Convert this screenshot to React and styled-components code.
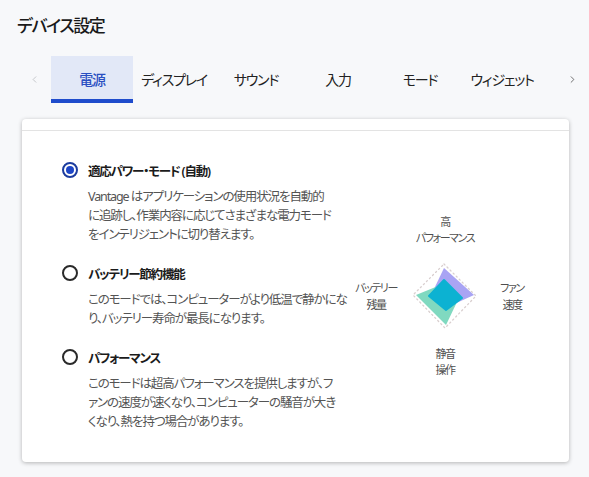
import React, { useState } from "react";
import styled, { createGlobalStyle } from "styled-components";
import { ChevronLeft, ChevronRight } from "lucide-react";

const GlobalStyle = createGlobalStyle`
  body {
    margin: 0;
    background: #f7f8fa;
    font-family: "Noto Sans", "Noto Sans CJK JP", sans-serif;
    font-feature-settings: "palt";
    color: #1c1c1c;
  }
`;

const Page = styled.div`
  width: 589px;
  height: 477px;
  padding-top: 14px;
  box-sizing: border-box;
  overflow: hidden;
`;

const Title = styled.h1`
  margin: 0 0 18px 17px;
  font-size: 17px;
  line-height: 24px;
  font-weight: 500;
  letter-spacing: -1.4px;
  color: #1a1a1a;
`;

const TabBar = styled.div`
  display: flex;
  align-items: stretch;
  height: 47px;
  margin: 0 0 16px 22px;
`;

const Chevron = styled.button`
  width: 24px;
  border: none;
  background: none;
  padding: 0;
  display: flex;
  align-items: center;
  justify-content: center;
  color: ${(p) => (p.$dim ? "#b4b6bb" : "#555")};
  margin-left: ${(p) => p.$gapLeft || 0}px;
  margin-right: ${(p) => p.$gapRight || 0}px;
`;

const Tab = styled.div`
  width: 82px;
  flex: none;
  display: flex;
  align-items: center;
  justify-content: center;
  box-sizing: border-box;
  font-size: 14px;
  letter-spacing: -1.2px;
  white-space: nowrap;
  font-weight: ${(p) => (p.$active ? 500 : 400)};
  color: ${(p) => (p.$active ? "#2a4fc2" : "#222")};
  background: ${(p) => (p.$active ? "#e2e8f7" : "transparent")};
  border-bottom: 4px solid ${(p) => (p.$active ? "#1f4ccc" : "transparent")};
  padding-top: 2px;
  cursor: pointer;
`;

const Card = styled.div`
  margin: 0 20px 0 22px;
  background: #fff;
  border-radius: 4px;
  box-shadow: 0 1px 4px rgba(0, 0, 0, 0.28);
  overflow: hidden;
`;

const CardTop = styled.div`
  height: 11px;
  border-bottom: 1px solid #e3e3e3;
`;

const CardBody = styled.div`
  display: flex;
  padding: 29px 0 31px 40px;
`;

const Options = styled.div`
  width: 280px;
  display: flex;
  flex-direction: column;
  gap: 19px;
`;

const Option = styled.div`
  display: flex;
  flex-direction: column;
`;

const OptionHead = styled.label`
  display: flex;
  align-items: center;
  gap: 10px;
  height: 20px;
  cursor: pointer;
`;

const Radio = styled.span`
  width: 16px;
  height: 16px;
  box-sizing: border-box;
  border-radius: 50%;
  border: 2px solid ${(p) => (p.$checked ? "#1c3c9e" : "#2a2a2a")};
  display: flex;
  align-items: center;
  justify-content: center;
  flex: none;
  &::after {
    content: "";
    width: 8px;
    height: 8px;
    border-radius: 50%;
    background: #1e46c6;
    display: ${(p) => (p.$checked ? "block" : "none")};
  }
`;

const OptionLabel = styled.span`
  font-size: 12.5px;
  font-weight: 600;
  letter-spacing: -1.2px;
  white-space: nowrap;
  color: #1b1b1b;
`;

const Description = styled.p`
  margin: 7px 0 0 26px;
  font-size: 12.5px;
  line-height: 19px;
  letter-spacing: -1.1px;
  white-space: nowrap;
  color: #545454;
`;

const Chart = styled.div`
  align-self: center;
  display: grid;
  grid-template-columns: 68px 70px 64px;
  grid-template-rows: auto 70px auto;
  row-gap: 15px;
  align-items: center;
  justify-items: center;
`;

const AxisLabel = styled.div`
  grid-column: ${(p) => p.$col};
  grid-row: ${(p) => p.$row};
  font-size: 11px;
  line-height: ${(p) => (p.$side ? 17 : 16)}px;
  letter-spacing: -1.4px;
  white-space: nowrap;
  color: #4f4f4f;
  text-align: center;
`;

const Diamond = styled.svg`
  grid-column: 2;
  grid-row: 2;
  display: block;
`;

const tabs = ["電源", "ディスプレイ", "サウンド", "入力", "モード", "ウィジェット"];

const modes = [
  {
    label: "適応パワー・モード (自動)",
    lines: [
      "Vantage はアプリケーションの使用状況を自動的",
      "に追跡し、作業内容に応じてさまざまな電力モード",
      "をインテリジェントに切り替えます。",
    ],
  },
  {
    label: "バッテリー節約機能",
    lines: [
      "このモードでは、コンピューターがより低温で静かにな",
      "り、バッテリー寿命が最長になります。",
    ],
  },
  {
    label: "パフォーマンス",
    lines: [
      "このモードは超高パフォーマンスを提供しますが、フ",
      "ァンの速度が速くなり、コンピューターの騒音が大き",
      "くなり、熱を持つ場合があります。",
    ],
  },
];

function RadarChart() {
  return (
    <Chart>
      <AxisLabel $col={2} $row={1}>
        高<br />パフォーマンス
      </AxisLabel>
      <AxisLabel $col={1} $row={2} $side>
        バッテリー<br />残量
      </AxisLabel>
      <Diamond width="70" height="70" viewBox="0 0 70 70">
        <polygon
          points="34,3 66,35 35,67 3,34"
          fill="none"
          stroke="#d9cfcf"
          strokeWidth="1.3"
          strokeDasharray="1.3 3"
          strokeLinecap="round"
        />
        <polygon points="34,7 64,34 42,44 24,28" fill="#a9a4f4" />
        <polygon points="6,34 28,25 47,41 36,64" fill="#80d9c0" />
        <polygon
          points="34,19 52,37 36,49 19,35"
          fill="#0cb2d2"
          stroke="#0cb2d2"
          strokeWidth="2"
          strokeLinejoin="round"
        />
      </Diamond>
      <AxisLabel $col={3} $row={2} $side>
        ファン<br />速度
      </AxisLabel>
      <AxisLabel $col={2} $row={3}>
        静音<br />操作
      </AxisLabel>
    </Chart>
  );
}

export default function App() {
  const [tab, setTab] = useState(0);
  const [mode, setMode] = useState(0);

  return (
    <Page>
      <GlobalStyle />
      <Title>デバイス設定</Title>
      <TabBar>
        <Chevron $dim $gapRight={5}>
          <ChevronLeft size={11} strokeWidth={1.6} />
        </Chevron>
        {tabs.map((t, i) => (
          <Tab key={t} $active={i === tab} onClick={() => setTab(i)}>
            {t}
          </Tab>
        ))}
        <Chevron $gapLeft={17}>
          <ChevronRight size={11} strokeWidth={1.8} />
        </Chevron>
      </TabBar>
      <Card>
        <CardTop />
        <CardBody>
          <Options>
            {modes.map((m, i) => (
              <Option key={m.label}>
                <OptionHead onClick={() => setMode(i)}>
                  <Radio $checked={i === mode} />
                  <OptionLabel>{m.label}</OptionLabel>
                </OptionHead>
                <Description>
                  {m.lines.map((l, j) => (
                    <React.Fragment key={j}>
                      {l}
                      {j < m.lines.length - 1 && <br />}
                    </React.Fragment>
                  ))}
                </Description>
              </Option>
            ))}
          </Options>
          <RadarChart />
        </CardBody>
      </Card>
    </Page>
  );
}
